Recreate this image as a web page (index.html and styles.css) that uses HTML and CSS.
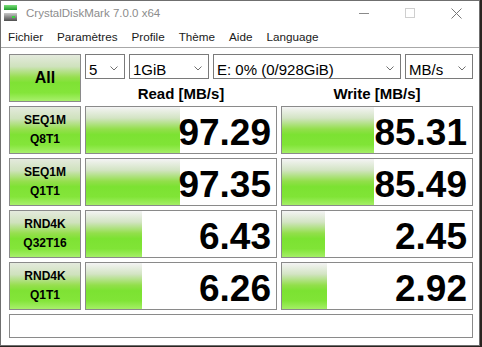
FILE: index.html
```html
<!DOCTYPE html>
<html lang="fr">
<head>
    <meta charset="UTF-8">
    <meta name="viewport" content="width=device-width, initial-scale=1.0">
    <title>CrystalDiskMark 7.0.0 x64</title>
    <link rel="stylesheet" href="styles.css">
</head>
<body>
    <div class="window">
        <div class="title-bar">
            <svg class="app-icon" width="16" height="16" viewBox="0 0 16 16">
                <defs>
                    <linearGradient id="g-led" x1="0" y1="0" x2="0" y2="1">
                        <stop offset="0" stop-color="#7be07b"/>
                        <stop offset="1" stop-color="#1f9a2a"/>
                    </linearGradient>
                    <linearGradient id="g-body" x1="0" y1="0" x2="0" y2="1">
                        <stop offset="0" stop-color="#c9c9c9"/>
                        <stop offset="0.5" stop-color="#8a8a8a"/>
                        <stop offset="1" stop-color="#4e4e4e"/>
                    </linearGradient>
                </defs>
                <rect x="0" y="0" width="13" height="5" fill="url(#g-led)"/>
                <rect x="0" y="8" width="13" height="8" fill="url(#g-body)"/>
                <rect x="8" y="11" width="3" height="2" fill="#39d43f"/>
            </svg>
            <span class="title">CrystalDiskMark 7.0.0 x64</span>
            <div class="caption-buttons">
                <span class="caption-btn">
                    <svg width="10" height="10" viewBox="0 0 10 10"><line x1="0" y1="5.5" x2="10" y2="5.5" stroke="#8a8a8a"/></svg>
                </span>
                <span class="caption-btn">
                    <svg width="10" height="10" viewBox="0 0 10 10"><rect x="0.5" y="0.5" width="9" height="9" fill="none" stroke="#cfcfcf"/></svg>
                </span>
                <span class="caption-btn">
                    <svg width="11" height="11" viewBox="0 0 11 11"><path d="M0.5 0.5 L10.5 10.5 M10.5 0.5 L0.5 10.5" stroke="#777" fill="none"/></svg>
                </span>
            </div>
        </div>

        <div class="menu-bar">
            <span>Fichier</span>
            <span>Paramètres</span>
            <span>Profile</span>
            <span>Thème</span>
            <span>Aide</span>
            <span>Language</span>
        </div>

        <div class="client">
            <div class="board">
                <div class="test-btn all">All</div>

                <div class="top-panel">
                    <div class="options">
                        <div class="combo count"><span>5</span><svg width="8" height="5" viewBox="0 0 8 5"><polyline points="0.5,0.5 4,4 7.5,0.5" fill="none" stroke="#707070"/></svg></div>
                        <div class="combo size"><span>1GiB</span><svg width="8" height="5" viewBox="0 0 8 5"><polyline points="0.5,0.5 4,4 7.5,0.5" fill="none" stroke="#707070"/></svg></div>
                        <div class="combo drive"><span>E: 0% (0/928GiB)</span><svg width="8" height="5" viewBox="0 0 8 5"><polyline points="0.5,0.5 4,4 7.5,0.5" fill="none" stroke="#707070"/></svg></div>
                        <div class="combo unit"><span>MB/s</span><svg width="8" height="5" viewBox="0 0 8 5"><polyline points="0.5,0.5 4,4 7.5,0.5" fill="none" stroke="#707070"/></svg></div>
                    </div>
                    <div class="headers">
                        <div>Read [MB/s]</div>
                        <div>Write [MB/s]</div>
                    </div>
                </div>

                <div class="test-btn">SEQ1M<br>Q8T1</div>
                <div class="score" style="background-size: 94px 100%">97.29</div>
                <div class="score" style="background-size: 92px 100%">85.31</div>

                <div class="test-btn">SEQ1M<br>Q1T1</div>
                <div class="score" style="background-size: 94px 100%">97.35</div>
                <div class="score" style="background-size: 92px 100%">85.49</div>

                <div class="test-btn">RND4K<br>Q32T16</div>
                <div class="score" style="background-size: 56px 100%">6.43</div>
                <div class="score" style="background-size: 43px 100%">2.45</div>

                <div class="test-btn">RND4K<br>Q1T1</div>
                <div class="score" style="background-size: 56px 100%">6.26</div>
                <div class="score" style="background-size: 45px 100%">2.92</div>

                <div class="comment"></div>
            </div>
        </div>
    </div>
</body>
</html>
```

FILE: styles.css
```css
body {
    margin: 0;
    background-color: #2a2420;
    font-family: "Liberation Sans", Arial, sans-serif;
    color: #000;
}
.window {
    width: 480px;
    height: 346px;
    box-sizing: border-box;
    border: 1px solid #6f6f6f;
    background: #fff;
}
.title-bar {
    display: flex;
    align-items: center;
    height: 24px;
}
.app-icon {
    margin: 0 6px 0 3px;
}
.title {
    flex: 1;
    color: #8c8c8c;
    font-size: 11.5px;
}
.caption-buttons {
    display: flex;
    height: 100%;
}
.caption-btn {
    width: 46px;
    display: flex;
    align-items: center;
    justify-content: center;
}
.menu-bar {
    display: flex;
    align-items: center;
    height: 22px;
    font-size: 11.7px;
    color: #1a1a1a;
    border-bottom: 1px solid #a8a8a8;
}
.menu-bar span {
    padding: 0 7px;
}
.client {
    padding: 6px 8px 0 8px;
}
.board {
    display: grid;
    grid-template-columns: 72px 192px 192px;
    gap: 4px;
}
.test-btn {
    height: 48px;
    box-sizing: border-box;
    border: 1px solid #8a8a8a;
    background: linear-gradient(#e4eadd 0%, #cfe2bd 25%, #97df50 48%, #7fe234 60%, #84e53a 82%, #a8f06c 100%);
    display: flex;
    align-items: center;
    justify-content: center;
    text-align: center;
    font-weight: bold;
    font-size: 12px;
    line-height: 19px;
}
.test-btn.all {
    font-size: 16px;
    line-height: normal;
}
.top-panel {
    grid-column: span 2;
    display: flex;
    flex-direction: column;
}
.options {
    display: flex;
    gap: 4px;
    height: 25px;
}
.combo {
    box-sizing: border-box;
    border: 1px solid #7a7a7a;
    display: flex;
    align-items: center;
    justify-content: space-between;
    padding: 0 6px 0 3px;
    font-size: 15px;
}
.combo span {
    padding-top: 5px;
}
.combo svg {
    margin-top: 3px;
}
.combo.count { width: 40px; }
.combo.size { width: 80px; }
.combo.drive { width: 188px; }
.combo.unit { flex: 1; }
.headers {
    flex: 1;
    display: grid;
    grid-template-columns: 192px 192px;
    gap: 4px;
    align-items: end;
    text-align: center;
    font-weight: bold;
    font-size: 15px;
}
.score {
    height: 48px;
    box-sizing: border-box;
    border: 1px solid #8a8a8a;
    background-color: #fff;
    background-image: linear-gradient(#f4f4f4 0%, #d3e4c4 24%, #93df4c 48%, #7ce232 60%, #80e436 82%, #a4ef66 100%);
    background-repeat: no-repeat;
    display: flex;
    align-items: center;
    justify-content: flex-end;
    padding: 5px 5px 0 0;
    font-weight: bold;
    font-size: 37px;
}
.comment {
    grid-column: span 3;
    height: 24px;
    box-sizing: border-box;
    border: 1px solid #8a8a8a;
}
```
